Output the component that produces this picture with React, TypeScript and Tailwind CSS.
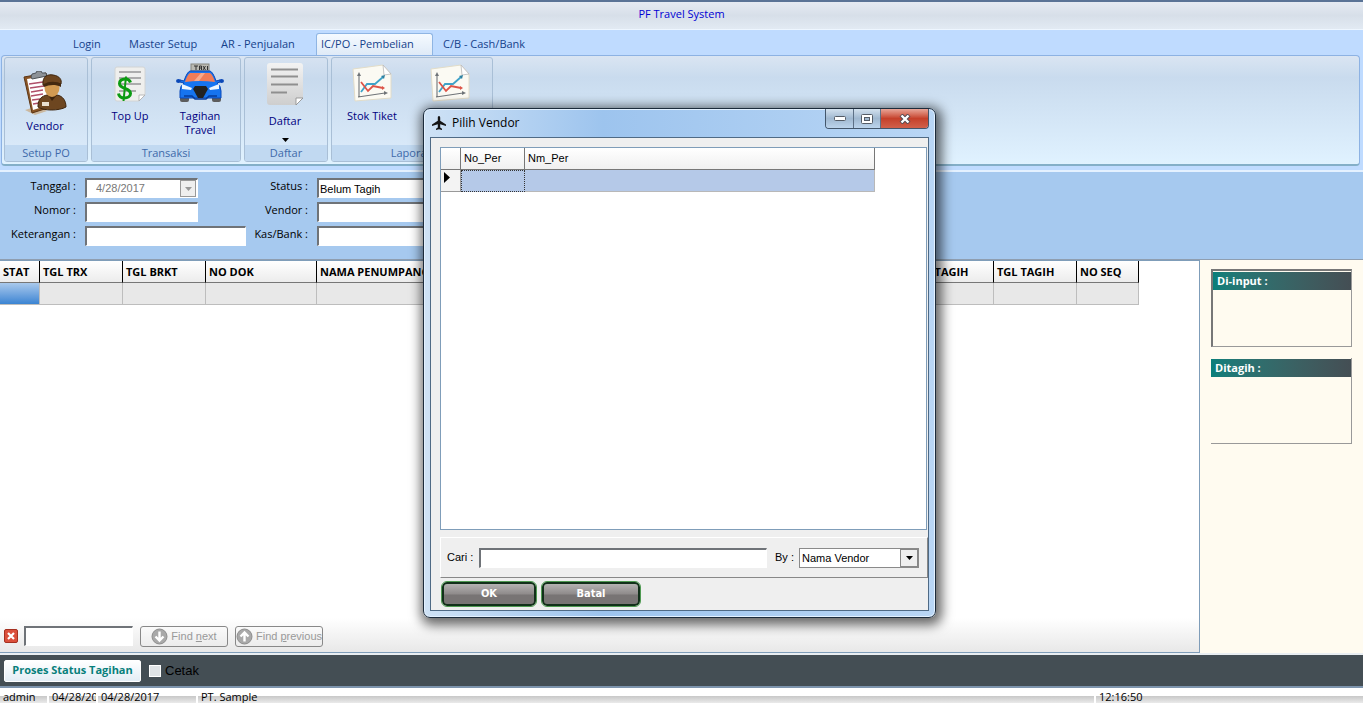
import React from 'react';

interface FieldProps {
  id: string;
  label: string;
  children: React.ReactNode;
}

const sunken = 'h-5 border border-t-2 border-l-2 border-t-[#6f7378] border-l-[#6f7378] border-r-white border-b-white bg-white px-px text-[11px] outline-none';

const VendorIcon = () => (
  <svg width="44" height="46" viewBox="0 0 44 46" aria-hidden="true">
    <path d="M2 39l10 5 12-4-9-5z" fill="#c9a77c" opacity=".7" />
    <path d="M1 6l22-4 5 34-19 6z" fill="#8a5526" stroke="#5c3514" />
    <path d="M4 8l18-3 4 29-16 5z" fill="#fff" />
    <path d="M6 13l14-2M7 17l14-2M8 21l12-2M8 25l12-2M9 29l8-1M10 33l6-1" stroke="#b0506a" strokeWidth="1.3" />
    <path d="M8 6l1-3 4-1 1-2 4 0 1 2 4 0 1 3-15 3z" fill="#8d9297" stroke="#4e5358" />
    <path d="M15 35c0-7 4-10 9-11l10 0c6 1 9 6 9 12-7 4-22 4-28 0z" fill="#6d4620" stroke="#3d240c" />
    <path d="M25 24l4 6 5-6z" fill="#3d240c" />
    <ellipse cx="29" cy="17" rx="7.500" ry="9" fill="#d19a52" />
    <path d="M20 14c-1-9 5-11 10-10 7 1 9 5 8 9-6-2-12-2-18 1z" fill="#6d4620" stroke="#3d240c" />
    <path d="M20 14c5-4 13-4 18-1l0 3c-6-3-12-2-17 0z" fill="#432910" />
    <rect x="19" y="31" width="7" height="4" fill="#e9dfcf" />
  </svg>
);

const TopUpIcon = () => (
  <svg width="32" height="36" viewBox="0 0 32 36" aria-hidden="true">
    <path d="M3 1h26q2 0 2 2v26l-6 6H3q-2 0-2-2V3q0-2 2-2z" fill="#efefed" stroke="#d2d4d4" />
    <path d="M25 35v-6h6z" fill="#fff" stroke="#aaa" strokeWidth=".8" />
    <path d="M5 6h22M5 12h22M5 18h22M5 25h17" stroke="#969696" strokeWidth="1.600" />
    <path d="M16.500 16.500c-1-3-3-3.500-5-3.500-4 0-6 2-6 4.500 0 6 11 4 11 10 0 3-3 4.500-6 4.500-3.500 0-5.500-1.500-6-4.500" fill="none" stroke="#0c9b12" strokeWidth="3" />
    <path d="M12 10.500L9.500 35" stroke="#0c9b12" strokeWidth="2" />
  </svg>
);

const TaxiIcon = () => (
  <svg width="48" height="40" viewBox="0 0 48 40" aria-hidden="true">
    <rect x="15" y="1" width="18" height="7" fill="#b9b9b2" stroke="#85857f" />
    <path d="M18 3h4M20 3v4M23.500 7V3h2v4M23.500 5h2M27 3l2.500 4M29.500 3L27 7M31.500 3v4" stroke="#333" strokeWidth="1" fill="none" />
    <rect x="4" y="31" width="9" height="8" rx="2" fill="#5d5d5d" />
    <rect x="36" y="31" width="9" height="8" rx="2" fill="#5d5d5d" />
    <ellipse cx="2.500" cy="18" rx="2.500" ry="2" fill="#0b48b8" />
    <ellipse cx="45.500" cy="18" rx="2.500" ry="2" fill="#0b48b8" />
    <path d="M14 8h20q3 1 6 10l4-1v2l-3 1q4 3 4 8v7H4v-7q0-5 4-8l-4-1v-2l4 1Q11 9 14 8z" fill="#1674f0" stroke="#0b48b8" />
    <path d="M14 10h20q3 2 5 9-15-2-30 0 2-7 5-9z" fill="#f07c58" />
    <path d="M18 18l7-8h4l-6 8z" fill="#f7a98c" />
    <path d="M6 21l10 4-1 2-9-1zM43 21l-10 4 1 2 9-1z" fill="#edf6ff" />
    <path d="M19 23h11l2 3-5 9h-5l-5-9z" fill="#222" />
    <path d="M8 33h8l3 3h11l3-3h8" fill="none" stroke="#063b9b" strokeWidth="1.500" />
  </svg>
);

const ListIcon = () => (
  <svg width="38" height="44" viewBox="0 0 38 44" aria-hidden="true">
    <defs>
      <linearGradient id="paper" x1="0" y1="0" x2="0" y2="1">
        <stop offset="0" stopColor="#f3f3f3" />
        <stop offset="1" stopColor="#cecece" />
      </linearGradient>
    </defs>
    <path d="M4 1h30q3 0 3 3v32l-7 7H4q-3 0-3-3V4q0-3 3-3z" fill="url(#paper)" />
    <path d="M30 43v-7h7z" fill="#fff" stroke="#888" strokeWidth=".8" />
    <path d="M5 7.500h27M5 14.500h27M5 22.500h27M5 30.500h16" stroke="#8f8f8f" strokeWidth="1.800" />
  </svg>
);

const ChartIcon = () => (
  <svg width="40" height="38" viewBox="0 0 40 38" aria-hidden="true">
    <path d="M1 5l30-4 8 9v24L3 37z" fill="#fbfaf3" stroke="#e2dcc8" />
    <path d="M31 1l1 10 7-1z" fill="#fff" stroke="#b9b9b9" strokeWidth=".8" />
    <path d="M7 33V10M6 33l27-4" stroke="#6f7478" strokeWidth="1.100" fill="none" />
    <path d="M5 12l2-4 2 4zM32 27l4 2-4 2z" fill="#6f7478" />
    <path d="M9 28l6-8 8 0 8-7" stroke="#3fa3c9" strokeWidth="1.800" fill="none" />
    <path d="M9 18l7 9 5-5 10 2" stroke="#dd5448" strokeWidth="1.800" fill="none" />
    <path d="M29 12l4-1-1 4z" fill="#2f7f9f" />
    <path d="M30 22l3 2-3 2z" fill="#dd5448" />
  </svg>
);

const PlaneIcon = () => (
  <svg width="14" height="14" viewBox="0 0 14 14" aria-hidden="true">
    <path d="M7 0c.8 0 1.200.8 1.200 1.800v3l5.800 3.700v1.500L8.200 8.300v3.200l1.800 1.300V14l-3-.8L4 14v-1.200l1.800-1.300V8.300L0 10V8.500l5.800-3.700v-3C5.800.8 6.200 0 7 0z" fill="#151515" />
  </svg>
);

const RoundArrow = ({ up }: { up?: boolean }) => (
  <svg width="17" height="17" viewBox="0 0 17 17" className="shrink-0" aria-hidden="true">
    <circle cx="8.500" cy="8.500" r="7.500" fill="#a9a9a9" stroke="#8d8d8d" />
    <path d={up ? 'M8.500 13.500V4.500M4.500 8.500l4-4 4 4' : 'M8.500 3.500v9M4.500 8.500l4 4 4-4'} stroke="#fff" strokeWidth="2.400" fill="none" />
  </svg>
);

const DownArrow = () => (
  <svg width="7" height="4" viewBox="0 0 7 4" aria-hidden="true">
    <path d="M0 0h7L3.500 4z" fill="currentColor" />
  </svg>
);

const Field: React.FC<FieldProps> = ({ id, label, children }) => (
  <>
    <label htmlFor={id} className="text-right leading-4">{label}</label>
    {children}
  </>
);

const RibbonGroup = ({ title, width, children }: { title: string; width: string; children: React.ReactNode }) => (
  <section className={`flex flex-col overflow-hidden rounded-[3px] border border-[#a9bfd6] bg-linear-to-b from-[#d6e2f1] via-[#c8daed] via-20% to-[#dcecfb] ${width}`}>
    <div className="flex min-h-0 flex-1 justify-center pr-[2px]">{children}</div>
    <h2 className="h-4 shrink-0 bg-[#c1d9f1] text-center leading-4 text-[#3e6aaa]">{title}</h2>
  </section>
);

const RibbonButton = ({ icon, label, className = 'gap-2' }: { icon: React.ReactNode; label: string; className?: string }) => (
  <button type="button" className={`flex w-[70px] flex-col items-center leading-[14px] text-[#00007f] ${className}`}>
    {icon}
    <span className="w-14">{label}</span>
  </button>
);

const tabs = [
  { name: 'Login', style: 'w-14 pl-[5px]' },
  { name: 'Master Setup', style: 'w-[92px] pl-[5px]' },
  { name: 'AR - Penjualan', style: 'w-[100px] pl-[5px]' },
  { name: 'IC/PO - Pembelian', style: 'w-[117px] pl-1 rounded-t-[3px] border border-b-0 border-[#8fb5e3] bg-linear-to-b from-[#f5faff] to-[#dfeaf7]' },
  { name: 'C/B - Cash/Bank', style: 'w-[100px] pl-[10px]' },
];

const columns = [
  { name: 'STAT', width: 'w-10' },
  { name: 'TGL TRX', width: 'w-[83px]' },
  { name: 'TGL BRKT', width: 'w-[83px]' },
  { name: 'NO DOK', width: 'w-[111px]' },
  { name: 'NAMA PENUMPANG', width: 'w-[594px]' },
  { name: 'NO TAGIH', width: 'w-[83px]' },
  { name: 'TGL TAGIH', width: 'w-[83px]' },
  { name: 'NO SEQ', width: 'w-[62px]' },
];

const Ribbon = () => (
  <nav className="bg-[#bfdbff] pb-1 font-['Open_Sans',sans-serif] text-[11px]">
    <div className="flex h-[25px] items-end pl-[68px]">
      {tabs.map((tab) => (
        <button key={tab.name} type="button" className={`h-[22px] text-left text-[#15428b] ${tab.style}`}>
          {tab.name}
        </button>
      ))}
    </div>
    <div className="mr-[3px] ml-px flex h-[111px] gap-[3px] rounded-[4px] border border-b-2 border-[#8db2e3] border-b-[#84afc8] bg-linear-to-b from-[#dae5f2] via-[#c9dbee] via-20% to-[#e0f2ff] px-[2px] pt-px pb-[2px]">
      <RibbonGroup title="Setup PO" width="w-[84px]">
        <RibbonButton icon={<VendorIcon />} label="Vendor" className="gap-[2px] pt-[13px]" />
      </RibbonGroup>
      <RibbonGroup title="Transaksi" width="w-[150px]">
        <RibbonButton icon={<TopUpIcon />} label="Top Up" className="gap-[7px] pt-2" />
        <RibbonButton icon={<TaxiIcon />} label="Tagihan Travel" className="gap-[6px] pt-[5px]" />
      </RibbonGroup>
      <RibbonGroup title="Daftar" width="w-[84px]">
        <button type="button" className="flex w-[70px] flex-col items-center pt-1 leading-[14px] text-[#00007f]">
          <ListIcon />
          <span className="mt-2 mb-[10px]">Daftar</span>
          <span className="text-black"><DownArrow /></span>
        </button>
      </RibbonGroup>
      <RibbonGroup title="Laporan" width="w-[162px]">
        <RibbonButton icon={<ChartIcon />} label="Stok Tiket" className="mr-2 gap-[7px] pt-[6px]" />
        <RibbonButton icon={<ChartIcon />} label="Laporan" className="gap-[7px] pt-[6px]" />
      </RibbonGroup>
    </div>
  </nav>
);

const FilterForm = () => (
  <form className="flex h-[90px] shrink-0 border-t-2 border-b border-t-[#e4f1ff] border-b-[#8f9eb0] bg-[#a6c9ef] pt-[6px] text-[11px]">
    <div className="grid w-[246px] auto-rows-[20px] grid-cols-[76px_1fr] gap-x-[9px] gap-y-1">
      <Field id="tanggal" label="Tanggal :">
        <div className={`flex w-[113px] ${sunken}`}>
          <input id="tanggal" disabled defaultValue="4/28/2017" className="min-w-0 flex-1 pl-2 font-['Liberation_Sans',sans-serif] text-[#777]" />
          <button type="button" disabled aria-label="Tanggal" className="flex w-4 items-center justify-center border border-[#999] bg-[#efefef] text-[#999]">
            <DownArrow />
          </button>
        </div>
      </Field>
      <Field id="nomor" label="Nomor :">
        <input id="nomor" className={`w-[113px] ${sunken}`} />
      </Field>
      <Field id="keterangan" label="Keterangan :">
        <input id="keterangan" className={`w-full ${sunken}`} />
      </Field>
    </div>
    <div className="grid w-[240px] auto-rows-[20px] grid-cols-[62px_1fr] gap-x-[9px] gap-y-1">
      <Field id="status" label="Status :">
        <input id="status" defaultValue="Belum Tagih" className={`w-full font-['Liberation_Sans',sans-serif] ${sunken}`} />
      </Field>
      <Field id="vendor" label="Vendor :">
        <input id="vendor" className={`w-full ${sunken}`} />
      </Field>
      <Field id="kas" label="Kas/Bank :">
        <input id="kas" className={`w-full ${sunken}`} />
      </Field>
    </div>
  </form>
);

const FindBar = () => {
  const button = 'flex h-[21px] w-[88px] items-center justify-center gap-[3px] rounded-[3px] border border-[#888] bg-linear-to-b from-[#fafafa] to-[#ececec] text-[#999] whitespace-nowrap';
  return (
    <div className="flex h-[34px] items-center bg-linear-to-b from-white to-[#e8e8e8] pt-[2px] pl-1 font-['Liberation_Sans',sans-serif] text-[11px]">
      <button type="button" aria-label="Close" className="flex size-[14px] items-center justify-center rounded-[2px] border border-[#a53020] bg-[#db4f3b]">
        <svg width="8" height="8" viewBox="0 0 8 8"><path d="M1 1l6 6M7 1L1 7" stroke="#fff" strokeWidth="2.200" /></svg>
      </button>
      <input aria-label="Find" className={`ml-1.5 w-[109px] ${sunken}`} />
      <button type="button" disabled className={`ml-[7px] ${button}`}>
        <RoundArrow />
        <span>Find <u>n</u>ext</span>
      </button>
      <button type="button" disabled className={`ml-[7px] ${button}`}>
        <RoundArrow up />
        <span>Find <u>p</u>revious</span>
      </button>
    </div>
  );
};

const DataGrid = () => (
  <div className="flex min-w-0 flex-1 flex-col border border-l-0 border-[#7f9db9] bg-white">
    <div className="flex-1 overflow-hidden">
      <table className="w-[1139px] table-fixed border-separate border-spacing-0 text-[11px]">
        <thead>
          <tr className="h-[22px]">
            {columns.map((col) => (
              <th key={col.name} className={`border-r border-b border-r-black border-b-[#777] bg-linear-to-b from-white to-[#ececec] p-0 pl-[3px] text-left leading-4 font-bold whitespace-nowrap ${col.width}`}>
                {col.name}
              </th>
            ))}
          </tr>
        </thead>
        <tbody>
          <tr className="h-[22px]">
            {columns.map((col, i) => (
              <td key={col.name} className={`border-r border-b border-[#bdbdbd] p-0 ${i === 0 ? 'bg-linear-to-b from-[#a9c9ec] to-[#3a84d2]' : 'bg-[#e8e8e8]'}`} />
            ))}
          </tr>
        </tbody>
      </table>
    </div>
    <FindBar />
  </div>
);

const SidePanel = () => (
  <aside className="w-[163px] bg-[#fffbf0] px-[11px] pt-[9px] text-[11px] font-bold text-white">
    <div className="h-[78px] border border-t-2 border-l-2 border-[#999] border-t-[#777] border-l-[#777] pt-px">
      <h3 className="h-[18px] bg-linear-to-r from-[#087f7b] to-[#444e54] pl-1 leading-[18px]">Di-input :</h3>
    </div>
    <div className="mt-[11px] h-[86px] border-r border-b border-[#999] pt-px">
      <h3 className="h-[18px] bg-linear-to-r from-[#087f7b] to-[#444e54] pl-1 leading-[18px]">Ditagih :</h3>
    </div>
  </aside>
);

const StatusBar = () => {
  const cell = 'h-[15px] overflow-hidden whitespace-nowrap pl-[3px] bg-linear-to-b from-white from-50% via-[#c9c9c9] via-55% to-[#eaeaea]';
  return (
    <footer className="flex h-[17px] shrink-0 gap-[2px] border-t-2 border-[#7d94ad] bg-white text-[11px] leading-[18px]">
      <span className={`w-[47px] ${cell}`}>admin</span>
      <span className={`w-[47px] ${cell}`}>04/28/2017</span>
      <span className={`w-[98px] ${cell}`}>04/28/2017</span>
      <span className={`flex-1 ${cell}`}>PT. Sample</span>
      <span className={`w-[267px] ${cell}`}>12:16:50</span>
    </footer>
  );
};

const VendorDialog = () => {
  const action = "h-6 rounded-[5px] border-2 border-[#12301a] bg-linear-to-b from-[#b5b2b2] from-0% via-[#8f8b8b] via-50% to-[#787474] to-55% font-bold text-white outline outline-[#4f9a52]";
  return (
    <div role="dialog" aria-label="Pilih Vendor" className="absolute top-[108px] left-[423px] flex h-[510px] w-[513px] flex-col rounded-[7px] border border-[#1c2b3b] bg-linear-to-r from-[#cfe2f5] via-[#9dc4ee] via-35% to-[#b9d6f5] px-[6px] pb-[6px] shadow-[2px_3px_12px_4px_rgba(0,0,0,0.6)] inset-ring inset-ring-[#e3f1ff]">
      <div className="flex h-[28px] justify-between">
        <h2 className="flex items-center gap-[6px] pl-[2px] font-['Open_Sans',sans-serif] text-[12px]">
          <PlaneIcon />
          Pilih Vendor
        </h2>
        <div className="flex h-5 overflow-hidden rounded-b-[4px] border border-t-0 border-[#43566b]">
          <button type="button" aria-label="Minimize" className="flex w-7 items-center justify-center border-r border-[#5d7086] bg-linear-to-b from-[#d3e1ee] via-[#a0b8d0] via-50% to-[#bcd4ec]">
            <svg width="12" height="5" viewBox="0 0 12 5"><rect x=".5" y=".5" width="11" height="4" rx="1" fill="#fff" stroke="#555c66" /></svg>
          </button>
          <button type="button" aria-label="Maximize" className="flex w-[27px] items-center justify-center border-r border-[#5d7086] bg-linear-to-b from-[#d3e1ee] via-[#a0b8d0] via-50% to-[#bcd4ec]">
            <svg width="12" height="10" viewBox="0 0 12 10"><rect x=".5" y=".5" width="11" height="9" rx="1" fill="#fff" stroke="#555c66" /><rect x="3.500" y="3.500" width="5" height="3" fill="#9fb6cd" stroke="#555c66" /></svg>
          </button>
          <button type="button" aria-label="Close" className="flex w-[47px] items-center justify-center bg-linear-to-b from-[#e7a598] from-0% via-[#c5402a] via-50% to-[#d1604a]">
            <svg width="12" height="10" viewBox="0 0 12 10"><path d="M2 1l8 8M10 1L2 9" stroke="#4f4a52" strokeWidth="4.200" /><path d="M2.500 1.500l7 7M9.500 1.500l-7 7" stroke="#fff" strokeWidth="2.400" /></svg>
          </button>
        </div>
      </div>
      <div className="flex min-h-0 flex-1 flex-col border border-[#4f6a85] bg-[#efefef] pt-[9px] pl-[9px] font-['Liberation_Sans',sans-serif] text-[11px]">
        <div className="mr-px h-[383px] border border-[#7f9db9] bg-white">
          <table className="w-[434px] table-fixed border-separate border-spacing-0">
            <thead>
              <tr className="h-[22px] bg-linear-to-b from-white to-[#efefef] text-left">
                <th aria-label="Row" className="w-5 border-r border-b border-[#777] p-0" />
                <th className="w-16 border-r border-b border-[#777] p-0 pl-[3px] font-normal">No_Per</th>
                <th className="border-r border-b border-[#777] p-0 pl-[3px] font-normal">Nm_Per</th>
              </tr>
            </thead>
            <tbody>
              <tr className="h-[22px] bg-[#b5c9e8]">
                <td className="border-r border-b border-[#999] bg-[#f3f3f3] p-0 pb-[6px] pl-[3px]">
                  <svg width="6" height="11" viewBox="0 0 6 11"><path d="M0 0v11l6-5.500z" /></svg>
                </td>
                <td className="border border-dotted border-[#333] p-0" />
                <td className="border-r border-b border-[#b8b8b8] p-0" />
              </tr>
            </tbody>
          </table>
        </div>
        <div className="mt-[7px] flex h-[41px] items-center border border-t-white border-l-white border-r-[#888] border-b-[#888] pl-[6px]">
          <label htmlFor="cari" className="w-8">Cari :</label>
          <input id="cari" className={`w-[288px] ${sunken}`} />
          <label htmlFor="by" className="ml-2 w-6">By :</label>
          <div className="relative h-5 w-[120px]">
            <select id="by" className="h-5 w-full appearance-none border border-[#8a8a8a] bg-white pl-[2px] leading-4 outline-none">
              <option>Nama Vendor</option>
            </select>
            <span className="pointer-events-none absolute top-px right-px flex h-[18px] w-[18px] items-center justify-center border border-[#888] bg-[#efefef]">
              <DownArrow />
            </span>
          </div>
        </div>
        <div className="flex gap-[6px] pt-1 pl-[2px] font-['DejaVu_Sans_Condensed','Noto_Sans',sans-serif]">
          <button type="button" className={`w-[94px] ${action}`}>OK</button>
          <button type="button" className={`w-[98px] ${action}`}>Batal</button>
        </div>
      </div>
    </div>
  );
};

export default function App() {
  return (
    <div className="relative flex h-screen flex-col overflow-hidden bg-white font-['Open_Sans',sans-serif] text-black">
      <header className="h-[30px] shrink-0 border-t-2 border-b border-t-[#5a7396] border-b-[#eef6ff] bg-linear-to-b from-[#e5eaf2] via-[#d7dfe9] via-50% to-[#e2eaf3]">
        <h1 className="text-center text-[11px] leading-6 text-[#0000d4]">PF Travel System</h1>
      </header>
      <Ribbon />
      <FilterForm />
      <main className="flex min-h-0 flex-1">
        <DataGrid />
        <SidePanel />
      </main>
      <div className="flex h-[33px] shrink-0 items-center border-t-2 border-[#e9eef2] bg-[#444e54] pl-1">
        <button type="button" className="h-[22px] w-[137px] rounded-[2px] border border-white bg-linear-to-b from-white to-[#e3edf5] text-[11px] font-bold text-[#087f7b]">
          Proses Status Tagihan
        </button>
        <label className="ml-2 flex items-center gap-1 font-['Liberation_Sans',sans-serif] text-[13px]">
          <input type="checkbox" className="size-3 appearance-none border border-white bg-[#dfe3e6]" />
          Cetak
        </label>
      </div>
      <StatusBar />
      <VendorDialog />
    </div>
  );
}
